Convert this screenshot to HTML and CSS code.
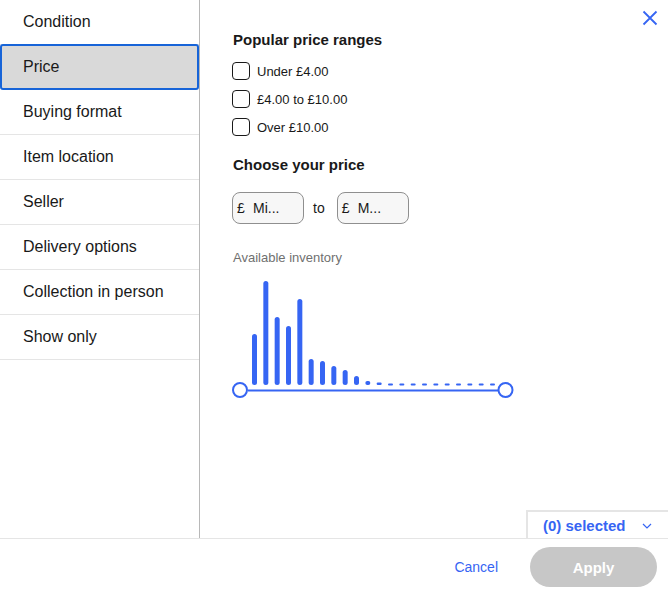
FILE: index.html
```html
<!DOCTYPE html>
<html lang="en">
<head>
<meta charset="utf-8">
<title>Filters</title>
<link rel="stylesheet" href="styles.css">
</head>
<body>
<div class="modal">
  <div class="main">
    <nav class="sidebar">
      <div class="item">Condition</div>
      <div class="item selected">Price</div>
      <div class="item">Buying format</div>
      <div class="item">Item location</div>
      <div class="item">Seller</div>
      <div class="item">Delivery options</div>
      <div class="item">Collection in person</div>
      <div class="item">Show only</div>
    </nav>
    <section class="content">
      <button class="close" aria-label="Close">
        <svg width="16" height="16" viewBox="0 0 16 16"><path d="M1.5 1.5 L14.5 14.5 M14.5 1.5 L1.5 14.5" stroke="#3665f3" stroke-width="1.8" fill="none"/></svg>
      </button>
      <div class="panel">
        <h2 class="heading">Popular price ranges</h2>
        <ul class="ranges">
          <li class="range"><span class="box"></span><span>Under £4.00</span></li>
          <li class="range"><span class="box"></span><span>£4.00 to £10.00</span></li>
          <li class="range"><span class="box"></span><span>Over £10.00</span></li>
        </ul>
        <h2 class="heading heading-price">Choose your price</h2>
        <div class="price-row">
          <div class="price-input"><span class="cur">£</span><span class="ph">Mi...</span></div>
          <span class="to">to</span>
          <div class="price-input"><span class="cur">£</span><span class="ph">M...</span></div>
        </div>
        <div class="inv-label">Available inventory</div>
        <svg class="chart" width="290" height="125" viewBox="0 0 290 125">
          <g fill="#3665f3">
            <rect x="24" y="59" width="5" height="51" rx="2.5"/>
            <rect x="35.33" y="6" width="5" height="104" rx="2.5"/>
            <rect x="46.67" y="42" width="5" height="68" rx="2.5"/>
            <rect x="58" y="51" width="5" height="59" rx="2.5"/>
            <rect x="69.33" y="24" width="5" height="86" rx="2.5"/>
            <rect x="80.67" y="84" width="5" height="26" rx="2.5"/>
            <rect x="92" y="86" width="5" height="24" rx="2.5"/>
            <rect x="103.33" y="91" width="5" height="19" rx="2.5"/>
            <rect x="114.67" y="95" width="5" height="15" rx="2.5"/>
            <rect x="126" y="101" width="5" height="9" rx="2.5"/>
            <rect x="137.33" y="106" width="5" height="4" rx="2"/>
            <rect x="148.67" y="107.5" width="5" height="2.5" rx="1.2"/>
            <rect x="160" y="108.5" width="5" height="2" rx="1"/>
            <rect x="171.33" y="108.5" width="5" height="2" rx="1"/>
            <rect x="182.67" y="108.5" width="5" height="2" rx="1"/>
            <rect x="194" y="108.5" width="5" height="2" rx="1"/>
            <rect x="205.33" y="108.5" width="5" height="2" rx="1"/>
            <rect x="216.67" y="108.5" width="5" height="2" rx="1"/>
            <rect x="228" y="108.5" width="5" height="2" rx="1"/>
            <rect x="239.33" y="108.5" width="5" height="2" rx="1"/>
            <rect x="250.67" y="108.5" width="5" height="2" rx="1"/>
            <rect x="262" y="108.5" width="5" height="2" rx="1"/>
            <rect x="20" y="114.5" width="250" height="2"/>
          </g>
          <circle cx="12" cy="115" r="7" fill="#fff" stroke="#3665f3" stroke-width="2"/>
          <circle cx="277.5" cy="115" r="7" fill="#fff" stroke="#3665f3" stroke-width="2"/>
        </svg>
      </div>
      <div class="selected-tab">
        <span>(0) selected</span>
        <svg width="10" height="6" viewBox="0 0 10 6"><path d="M1 1 L5 5 L9 1" stroke="#3665f3" stroke-width="1.2" fill="none"/></svg>
      </div>
    </section>
  </div>
  <footer class="footer">
    <button class="cancel">Cancel</button>
    <button class="apply" disabled>Apply</button>
  </footer>
</div>
</body>
</html>
```

FILE: styles.css
```css
* { box-sizing: border-box; }
html, body { margin: 0; padding: 0; background: #fff; }
body {
  font-family: "Liberation Sans", Arial, sans-serif;
  color: #191919;
}
.modal {
  width: 668px;
  height: 593px;
  display: flex;
  flex-direction: column;
}
.main {
  display: flex;
  height: 539px;
  border-bottom: 1px solid #e5e5e5;
}
.sidebar {
  width: 200px;
  border-right: 1px solid #b8b8b8;
  flex-shrink: 0;
}
.item {
  height: 45px;
  border-bottom: 1px solid #e5e5e5;
  display: flex;
  align-items: center;
  padding-left: 23px;
  font-size: 16px;
}
.item.selected {
  height: 46px;
  margin-top: -1px;
  border: 2px solid #1764d8;
  border-radius: 3px;
  background: #d9d9d9;
  padding-left: 21px;
}
.content {
  flex: 1;
  position: relative;
  display: flex;
  flex-direction: column;
}
.close {
  position: absolute;
  top: 10px;
  right: 10px;
  border: 0;
  background: none;
  padding: 0;
  width: 16px;
  height: 16px;
  cursor: pointer;
}
.close svg { display: block; }
.panel {
  padding: 30px 0 0 32px;
}
.heading {
  margin: 0;
  font-size: 15px;
  font-weight: bold;
  line-height: 20px;
  padding-left: 1px;
}
.ranges {
  list-style: none;
  margin: 7px 0 0;
  padding: 0;
}
.range {
  height: 28px;
  display: flex;
  align-items: center;
  font-size: 13px;
}
.box {
  width: 18px;
  height: 18px;
  border: 1.5px solid #191919;
  border-radius: 4px;
  margin-right: 7px;
  flex-shrink: 0;
}
.heading-price { margin-top: 14px; }
.price-row {
  display: flex;
  align-items: center;
  margin-top: 17px;
}
.price-input {
  width: 72px;
  height: 32px;
  border: 1px solid #8f8f8f;
  border-radius: 8px;
  background: #f7f7f7;
  display: flex;
  align-items: center;
  font-size: 14px;
  padding-left: 4px;
}
.cur { width: 16px; }
.to {
  font-size: 14px;
  margin: 0 12px 0 9px;
}
.inv-label {
  margin-top: 26px;
  font-size: 13px;
  line-height: 16px;
  color: #707070;
  padding-left: 1px;
}
.chart {
  display: block;
  margin: 9px 0 0 -4px;
}
.selected-tab {
  margin-top: auto;
  align-self: flex-end;
  width: 142px;
  height: 28px;
  border-top: 2px solid #e5e5e5;
  border-left: 2px solid #e5e5e5;
  display: flex;
  align-items: center;
  justify-content: space-between;
  padding: 0 16px 0 15px;
  color: #3665f3;
  font-size: 15px;
  font-weight: bold;
}
.selected-tab svg { display: block; margin-top: 2px; }
.footer {
  flex: 1;
  display: flex;
  align-items: center;
  justify-content: flex-end;
  padding-right: 11px;
  gap: 32px;
}
.cancel {
  border: 0;
  background: none;
  padding: 0;
  margin-top: 2px;
  font-family: inherit;
  font-size: 14px;
  color: #3665f3;
  cursor: pointer;
}
.apply {
  width: 127px;
  height: 40px;
  border: 0;
  border-radius: 20px;
  background: #c7c7c7;
  color: #fff;
  font-family: inherit;
  font-size: 15px;
  font-weight: bold;
  margin-top: 2px;
}
```
